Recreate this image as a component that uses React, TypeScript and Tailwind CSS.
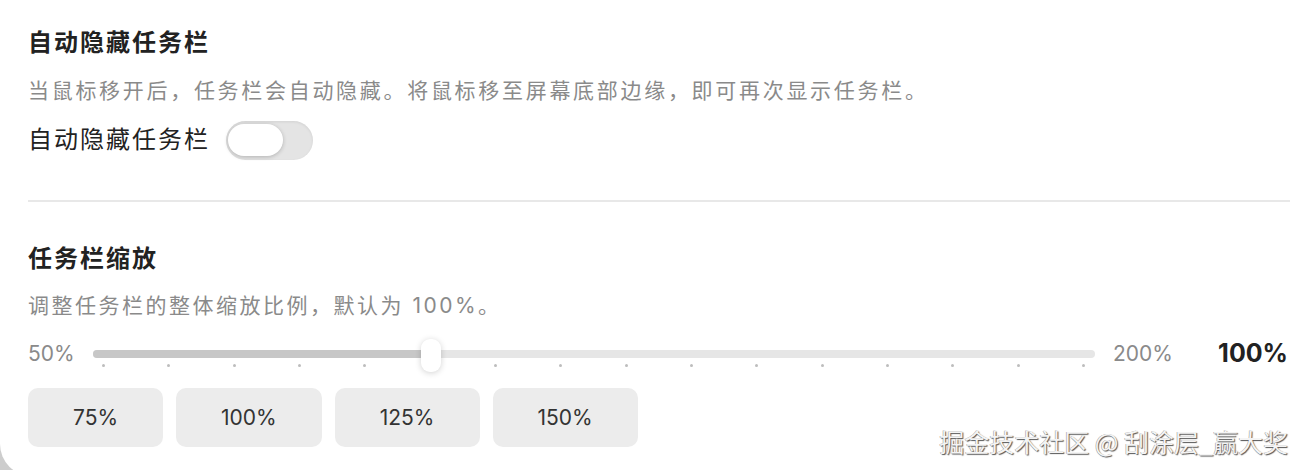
import React from "react";

const FONT = "font-['Inter','Noto_Sans_CJK_SC',sans-serif]";

function Toggle() {
  return (
    <div className="w-[87px] h-[39px] rounded-full bg-[#e4e4e4] shadow-[inset_0_1px_3px_rgba(0,0,0,0.08)] flex items-center pl-[2px]">
      <div className="w-[55px] h-[32px] rounded-full bg-white shadow-[0_1px_4px_rgba(0,0,0,0.22)]" />
    </div>
  );
}

function Slider() {
  const dots = Array.from({ length: 16 }, (_, i) => i);
  return (
    <div className="relative w-[1002px] h-[34px] ml-[18px]">
      <div className="absolute left-0 right-0 top-[13px] h-[8px] rounded-full bg-[#e6e6e6]" />
      <div className="absolute left-0 top-[13px] h-[8px] w-[338px] rounded-full bg-[#c7c7c7]" />
      <div className="absolute left-[10px] right-[10px] top-[27px] flex justify-between">
        {dots.map((i) => (
          <div key={i} className="w-[3px] h-[3px] rounded-full bg-[#bdbdbd] -ml-[1px]" />
        ))}
      </div>
      <div className="absolute left-[328px] top-[2px] w-[20px] h-[33px] rounded-[9px] bg-white shadow-[0_1px_6px_rgba(0,0,0,0.18)]" />
    </div>
  );
}

export default function App() {
  const presets = ["75%", "100%", "125%", "150%"];
  return (
    <div className={`w-[1304px] h-[470px] overflow-hidden bg-[#cdcdcd] ${FONT}`}>
      <div className="relative h-[476px] bg-white rounded-bl-[32px] pl-[28px] pr-[14px] flex flex-col">
        <div className="pt-[28px] text-[24px] leading-[30px] font-bold tracking-[2px] text-[#222]">
          自动隐藏任务栏
        </div>
        <div className="mt-[18px] text-[21px] leading-[30px] tracking-[2.7px] text-[#8a8a8a]">
          当鼠标移开后，任务栏会自动隐藏。将鼠标移至屏幕底部边缘，即可再次显示任务栏。
        </div>
        <div className="mt-[14px] h-[40px] flex items-center">
          <span className="text-[24px] tracking-[2px] text-[#222] leading-[30px]">自动隐藏任务栏</span>
          <div className="ml-[16px]">
            <Toggle />
          </div>
        </div>
        <div className="mt-[40px] h-[2px] bg-[#e8e8e8]" />
        <div className="mt-[42px] text-[24px] leading-[30px] font-bold tracking-[2px] text-[#222]">
          任务栏缩放
        </div>
        <div className="mt-[17px] text-[21px] leading-[30px] tracking-[2.5px] text-[#8a8a8a]">
          调整任务栏的整体缩放比例，默认为 100%。
        </div>
        <div className="mt-[16px] h-[34px] flex items-center">
          <span className="text-[21px] text-[#8a8a8a] w-[47px]">50%</span>
          <Slider />
          <span className="ml-[18px] text-[21px] text-[#8a8a8a]">200%</span>
          <span className="ml-auto text-[25px] font-bold text-[#222] pr-[2px]">100%</span>
        </div>
        <div className="mt-[17px] flex gap-[13px]">
          {presets.map((p) => (
            <div
              key={p}
              className="h-[59px] px-[45px] rounded-[10px] bg-[#ececec] flex items-center justify-center text-[21px] text-[#333]"
            >
              {p}
            </div>
          ))}
        </div>
        <div className="absolute right-[16px] bottom-[19px] text-[25px] leading-[32px] text-[#f4f4f4] [text-shadow:1px_1px_1px_#555,-0.5px_-0.5px_0.5px_#999] font-['Noto_Sans_CJK_SC',sans-serif]">
          掘金技术社区 @ 刮涂层_赢大奖
        </div>
      </div>
    </div>
  );
}
